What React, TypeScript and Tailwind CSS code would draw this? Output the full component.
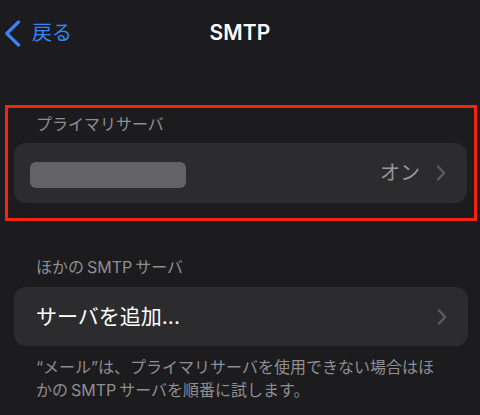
import React from "react";

function Chevron() {
  return (
    <svg width="10" height="16" viewBox="0 0 10 16" fill="none" className="shrink-0">
      <path d="M2 1.5 L8.2 8 L2 14.5" stroke="#5c5c61" strokeWidth="2.4" strokeLinecap="round" strokeLinejoin="round" />
    </svg>
  );
}

export default function App() {
  return (
    <div
      className="w-[480px] h-[415px] overflow-hidden bg-[#1c1c1e] text-white"
      style={{ fontFamily: '"Inter", "Noto Sans CJK JP", sans-serif' }}
    >
      <div className="grid grid-cols-[1fr_auto_1fr] items-center h-[66px]">
        <div className="flex items-center pl-[4px] gap-[11px] text-[#3a82f7]">
          <svg width="17" height="27" viewBox="0 0 17 27" fill="none" className="shrink-0">
            <path d="M14.5 2 L2.8 13.5 L14.5 25" stroke="#3a82f7" strokeWidth="3.2" strokeLinecap="round" strokeLinejoin="round" />
          </svg>
          <span className="text-[20px] leading-[26px]">戻る</span>
        </div>
        <div className="text-[21px] font-semibold leading-[26px] tracking-[0.2px]">SMTP</div>
        <div />
      </div>

      <div className="mt-[39px] ml-[5px] mr-[3px] h-[116px] border-[3px] border-[#f5240f] flex flex-col">
        <div className="pt-[6px] pl-[28px] text-[16px] leading-[20px] text-[#8e8e93]">プライマリサーバ</div>
        <div className="mt-[9px] ml-[6px] mr-[7px] h-[60px] rounded-[12px] bg-[#2c2c2e] flex items-center pl-[16px] pr-[21px]">
          <div className="w-[156px] h-[26px] rounded-[6px] bg-[#636366] mt-[4px]" />
          <div className="flex-1" />
          <span className="text-[20px] leading-[26px] text-[#98989f] mr-[16px]">オン</span>
          <Chevron />
        </div>
      </div>

      <div className="mt-[36px] pl-[36px] text-[16px] leading-[20px] text-[#8e8e93]">
        ほかの<span className="mx-[3px]">SMTP</span>サーバ
      </div>
      <div className="mt-[10px] ml-[14px] mr-[12px] h-[59px] rounded-[12px] bg-[#2c2c2e] flex items-center pl-[22px] pr-[21px]">
        <span className="text-[21px] leading-[28px] text-white">サーバを追加...</span>
        <div className="flex-1" />
        <Chevron />
      </div>

      <div className="mt-[10px] px-[36px] text-[16px] leading-[23px] text-[#8e8e93]">
        “メール”は、プライマリサーバを使用できない場合はほ
        <br />
        かの<span className="mx-[3px]">SMTP</span>サーバを順番に試します。
      </div>
    </div>
  );
}
